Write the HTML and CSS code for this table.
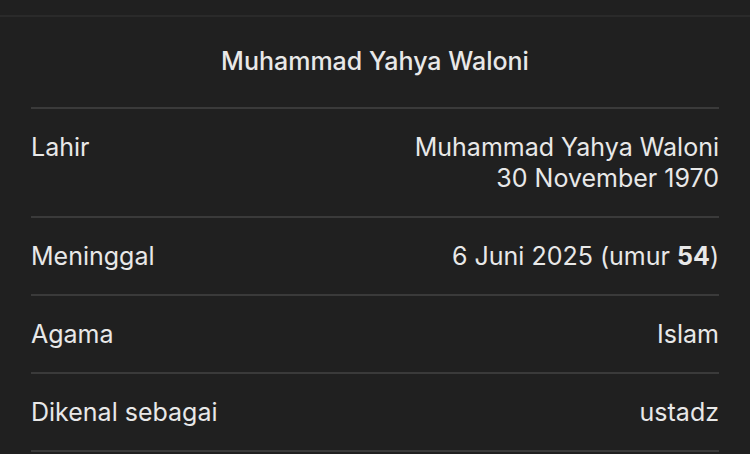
FILE: index.html
```html
<!DOCTYPE html>
<html lang="id">
<head>
<meta charset="utf-8">
<link rel="stylesheet" href="styles.css">
</head>
<body>
<div class="topbar"></div>
<div class="card">
  <h1 class="title">Muhammad Yahya Waloni</h1>
  <div class="row">
    <div class="label">Lahir</div>
    <div class="value">Muhammad Yahya Waloni<br>30 November 1970</div>
  </div>
  <div class="row">
    <div class="label">Meninggal</div>
    <div class="value">6 Juni 2025 (umur <b>54</b>)</div>
  </div>
  <div class="row">
    <div class="label">Agama</div>
    <div class="value">Islam</div>
  </div>
  <div class="row">
    <div class="label">Dikenal sebagai</div>
    <div class="value">ustadz</div>
  </div>
</div>
</body>
</html>
```
FILE: styles.css
```css
html, body {
  margin: 0;
  padding: 0;
  background: #202020;
  color: #e8e8e8;
  font-family: Inter, "Open Sans", sans-serif;
}
.topbar {
  height: 15px;
  border-bottom: 2px solid #2a2a2a;
}
.card {
  padding: 0 31px 0 31px;
}
.title {
  margin: 0;
  font-size: 25px;
  font-weight: 500;
  text-align: center;
  line-height: 31px;
  padding: 29px 0 30px;
  border-bottom: 2px solid #3a3a3a;
}
.row {
  display: flex;
  justify-content: space-between;
  align-items: flex-start;
  font-size: 25px;
  line-height: 31px;
  padding: 23px 0 22px;
  border-bottom: 2px solid #3a3a3a;
}
.value {
  text-align: right;
}
.value b {
  font-weight: 700;
}
```
